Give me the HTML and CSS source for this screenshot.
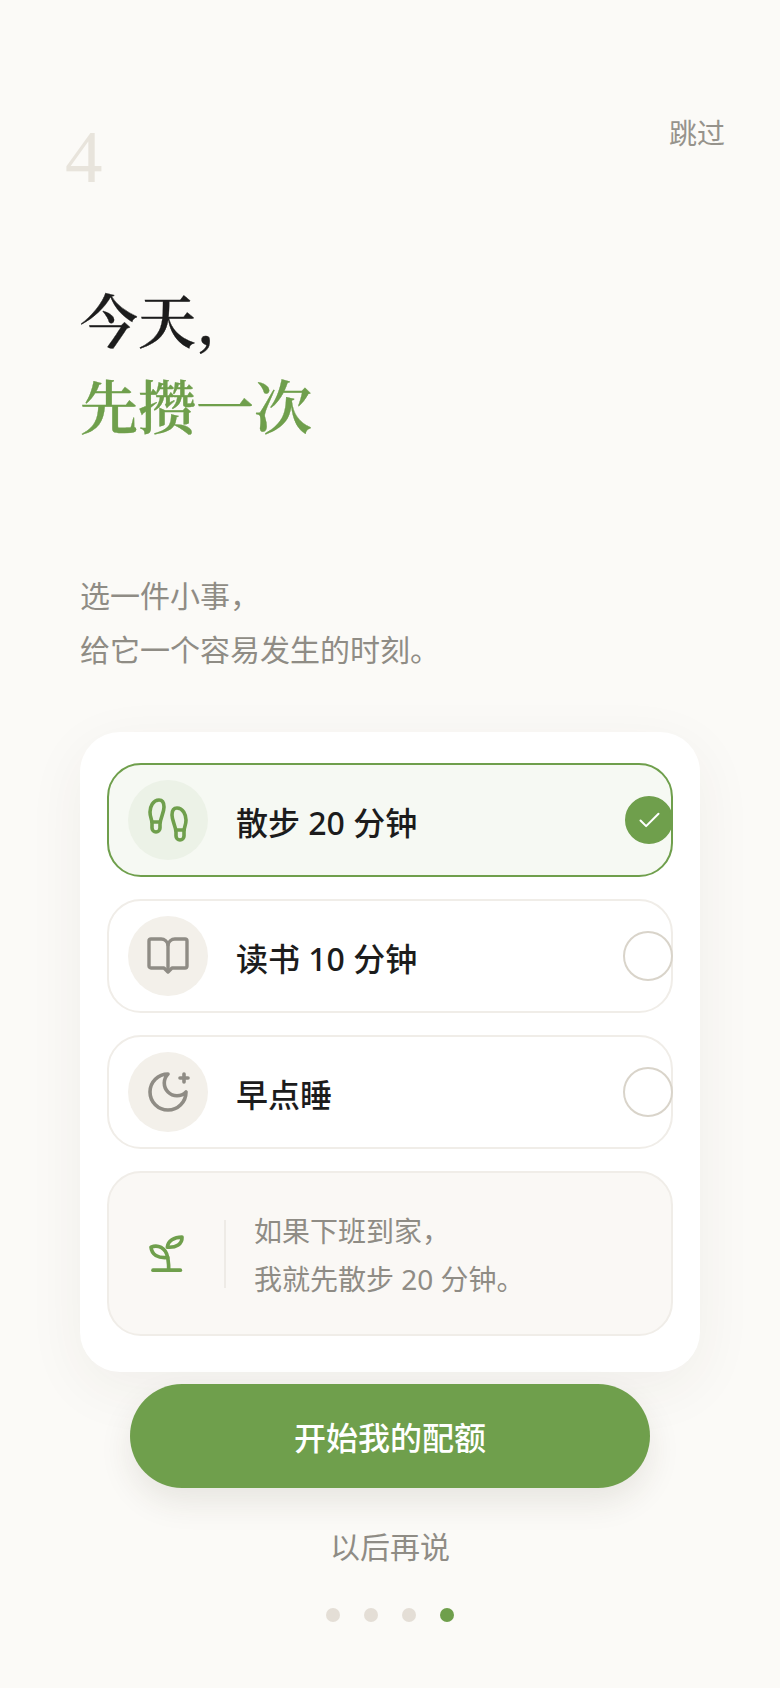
FILE: index.html
```html
<!DOCTYPE html>
<html lang="zh-CN">
<head>
<meta charset="utf-8">
<title>今天,先攒一次</title>
<link rel="stylesheet" href="styles.css">
</head>
<body>
<main class="page">
  <header class="top">
    <div class="step">4</div>
    <a class="skip">跳过</a>
  </header>
  <h1 class="title"><span>今天,</span><span class="green">先攒一次</span></h1>
  <p class="sub">选一件小事&#xFF0C;<br>给它一个容易发生的时刻。</p>
  <section class="card">
    <div class="option selected">
      <div class="ico">
        <svg viewBox="0 0 24 24" class="svg"><path d="M4 16v-2.38C4 11.5 2.97 10.5 3 8c.03-2.72 1.49-6 4.5-6C9.37 2 10 3.8 10 5.5c0 3.11-2 5.66-2 8.68V16a2 2 0 1 1-4 0Z"/><path d="M20 20v-2.38c0-2.12 1.03-3.12 1-5.62-.03-2.72-1.49-6-4.5-6C14.63 6 14 7.8 14 9.5c0 3.11 2 5.66 2 8.68V20a2 2 0 1 0 4 0Z"/><path d="M16 17h4"/><path d="M4 13h4"/></svg>
      </div>
      <span class="label">散步 20 分钟</span>
      <div class="radio on"><svg viewBox="0 0 24 24" class="tick"><path d="M20 6 9 17l-5-5"/></svg></div>
    </div>
    <div class="option">
      <div class="ico">
        <svg viewBox="0 0 48 48" class="svg wide"><path d="M5 9a2 2 0 0 1 2-2h10a7 7 0 0 1 7 6 7 7 0 0 1 7-6h10a2 2 0 0 1 2 2v25a2 2 0 0 1-2 2H28l-4 4-4-4H7a2 2 0 0 1-2-2z"/><path d="M24 13v26"/></svg>
      </div>
      <span class="label">读书 10 分钟</span>
      <div class="radio"></div>
    </div>
    <div class="option">
      <div class="ico">
        <svg viewBox="0 0 24 24" class="svg"><path d="M12 3a6 6 0 0 0 9 9 9 9 0 1 1-9-9Z"/><path d="M20 3v4"/><path d="M22 5h-4"/></svg>
      </div>
      <span class="label">早点睡</span>
      <div class="radio"></div>
    </div>
    <div class="hint">
      <svg viewBox="170 250 120 125" class="sprout"><path d="M182 292c20-8 44 0 50 31-30 3-48-9-50-31z"/><path d="M275 262c-24 0-42 11-44 30 27 2 45-9 44-30z"/><path d="M232 322c2 14 4 24 3 38"/><path d="M188 361h82"/></svg>
      <div class="divider"></div>
      <p class="hint-text">如果下班到家&#xFF0C;<br>我就先散步 20 分钟。</p>
    </div>
  </section>
  <button class="cta">开始我的配额</button>
  <a class="later">以后再说</a>
  <div class="dots"><i class="dot"></i><i class="dot"></i><i class="dot"></i><i class="dot active"></i></div>
</main>
</body>
</html>
```
FILE: styles.css
```css
* { box-sizing: border-box; }
html, body { margin: 0; padding: 0; }
body {
  background: #fbfaf7;
  font-family: "Noto Sans", "Noto Sans CJK SC", sans-serif;
  color: #1c1c1c;
}
.page {
  width: 780px;
  height: 1688px;
  overflow: hidden;
  display: flex;
  flex-direction: column;
  align-items: flex-start;
}
.top {
  width: 100%;
  display: flex;
  justify-content: space-between;
  align-items: flex-start;
  padding: 113px 55px 0 65px;
  height: 275px;
}
.step {
  font-family: "Liberation Serif", serif;
  font-size: 75px;
  font-weight: 400;
  line-height: 88px;
  color: #e8e4dc;
}
.skip {
  font-size: 28px;
  line-height: 40px;
  color: #96938c;
}
.title {
  margin: 0 0 0 80px;
  font-family: "Noto Serif CJK SC", "Source Han Serif SC", "Liberation Serif", serif;
  font-size: 58px;
  font-weight: 600;
  line-height: 86px;
  -webkit-text-stroke: 0.3px currentColor;
  display: flex;
  flex-direction: column;
}
.green { color: #6f9f4c; }
.sub {
  margin: 122px 0 0 80px;
  font-size: 30px;
  line-height: 54px;
  color: #8f8c85;
}
.card {
  margin: 55px 0 0 80px;
  width: 620px;
  height: 640px;
  padding: 31px 27px 0;
  background: #fff;
  border-radius: 40px;
  box-shadow: 0 16px 60px rgba(60, 50, 30, 0.06);
  display: flex;
  flex-direction: column;
  gap: 22px;
}
.option {
  height: 114px;
  display: flex;
  align-items: center;
  padding-left: 19px;
  border: 2px solid #f0ede8;
  border-radius: 34px;
  background: #fff;
}
.option.selected {
  background: #f6f9f3;
  border-color: #6f9f4c;
}
.ico {
  width: 80px;
  height: 80px;
  flex: none;
  border-radius: 50%;
  background: #f3f0ea;
  display: flex;
  align-items: center;
  justify-content: center;
  color: #8f8c85;
}
.selected .ico {
  background: #ecf2e7;
  color: #6f9f4c;
}
.svg {
  width: 48px;
  height: 48px;
  fill: none;
  stroke: currentColor;
  stroke-width: 1.8;
  stroke-linecap: round;
  stroke-linejoin: round;
}
.svg.wide { stroke-width: 3.4; }
.label {
  margin-left: 28px;
  padding-top: 6px;
  flex: 1;
  font-size: 32px;
  font-weight: 500;
  line-height: 44px;
}
.radio {
  width: 50px;
  height: 50px;
  flex: none;
  margin-right: -2px;
  border-radius: 50%;
  border: 2px solid #d9d4ca;
  display: flex;
  align-items: center;
  justify-content: center;
}
.radio.on {
  width: 48px;
  height: 48px;
  background: #6f9f4c;
  border-color: #6f9f4c;
}
.tick {
  width: 27px;
  height: 27px;
  fill: none;
  stroke: #fff;
  stroke-width: 1.8;
  stroke-linecap: round;
  stroke-linejoin: round;
}
.hint {
  height: 165px;
  display: flex;
  align-items: center;
  padding-left: 38px;
  background: #faf8f5;
  border: 2px solid #f0ede8;
  border-radius: 34px;
}
.sprout {
  width: 40px;
  height: 42px;
  flex: none;
  fill: none;
  stroke: #6f9f4c;
  stroke-width: 11;
  stroke-linecap: round;
  stroke-linejoin: round;
}
.divider {
  width: 2px;
  height: 68px;
  margin: 0 28px 0 37px;
  background: #eeebe6;
}
.hint-text {
  margin: 0;
  padding-top: 3px;
  font-size: 28px;
  line-height: 48px;
  color: #8f8c85;
}
.cta {
  margin: 12px 0 0 130px;
  width: 520px;
  height: 104px;
  border: 0;
  border-radius: 52px;
  background: #6f9f4c;
  color: #fff;
  font-family: inherit;
  font-size: 32px;
  font-weight: 500;
  box-shadow: 0 14px 32px rgba(60, 50, 30, 0.1);
}
.later {
  align-self: center;
  margin-top: 38px;
  font-size: 30px;
  line-height: 42px;
  color: #8f8c85;
}
.dots {
  align-self: center;
  margin-top: 40px;
  display: flex;
  gap: 24px;
}
.dot {
  width: 14px;
  height: 14px;
  border-radius: 50%;
  background: #e4ded6;
}
.dot.active { background: #6f9f4c; }
```
